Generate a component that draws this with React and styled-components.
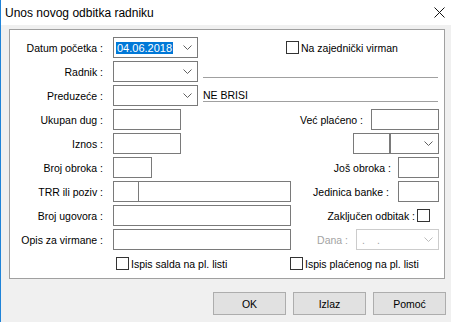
import React from 'react';
import styled, { createGlobalStyle } from 'styled-components';

const GlobalStyle = createGlobalStyle`
  html, body {
    margin: 0;
    padding: 0;
    background: #f0f0f0;
  }
  * {
    box-sizing: border-box;
  }
`;

const Window = styled.div`
  width: 451px;
  height: 322px;
  display: flex;
  flex-direction: column;
  background: #f0f0f0;
  border-left: 1px solid #1f83d8;
  font-family: "Liberation Sans", Arial, sans-serif;
  font-size: 10.5px;
  color: #000;
  overflow: hidden;
`;

const TitleBar = styled.div`
  height: 25px;
  flex: none;
  display: flex;
  align-items: center;
  justify-content: space-between;
  padding: 0 6px 0 4px;
  background: #fff;
  font-size: 12px;
`;

const Panel = styled.div`
  margin: 4px 6px 0 8px;
  height: 250px;
  display: flex;
  flex-direction: column;
  gap: 3px;
  padding: 7px 5px 4px 0;
  background: #fff;
  border: 1px solid #a0a0a0;
`;

const Row = styled.div`
  height: 21px;
  display: flex;
  align-items: center;
`;

const Label = styled.div`
  width: 93px;
  flex: none;
  margin-right: 10px;
  text-align: right;
  white-space: nowrap;
`;

const RightGroup = styled.div`
  margin-left: auto;
  margin-right: ${({ $mr }) => $mr || 0}px;
  display: flex;
  align-items: center;
`;

const RightLabel = styled.span`
  margin-right: ${({ $gap }) => $gap}px;
  white-space: nowrap;
  color: ${({ $muted }) => ($muted ? '#a3a3a3' : '#000')};
`;

const Field = styled.div`
  width: ${({ $w }) => $w}px;
  height: 21px;
  flex: none;
  display: flex;
  align-items: center;
  margin-left: ${({ $ml }) => $ml || 0}px;
  background: #fff;
  border: 1px solid ${({ $disabled }) => ($disabled ? '#cccccc' : '#7a7a7a')};
`;

const Chevron = styled.svg`
  margin-left: auto;
  margin-right: 5px;
  flex: none;
`;

const DateText = styled.span`
  margin-left: 2px;
  padding: 0 1px;
  font-size: 11px;
  line-height: 12px;
  color: #fff;
  background: #0078d7;
`;

const Dots = styled.span`
  margin-left: 5px;
  color: #a3a3a3;
  letter-spacing: 12px;
`;

const Underline = styled.div`
  flex: 1;
  align-self: flex-start;
  height: 17px;
  margin: 0 1px 0 5px;
  padding-top: 4px;
  line-height: 12px;
  border-bottom: 1px solid #a0a0a0;
`;

const Check = styled.label`
  display: flex;
  align-items: center;
  gap: 2px;
  flex: none;
  width: ${({ $w }) => ($w ? `${$w}px` : 'auto')};
  margin-left: ${({ $ml }) => $ml || 0}px;
  white-space: nowrap;
`;

const Box = styled.span`
  width: 13px;
  height: 13px;
  flex: none;
  background: #fff;
  border: 1px solid #333;
`;

const Footer = styled.div`
  display: flex;
  justify-content: flex-end;
  gap: 7px;
  padding: 13px 5px 0 0;
`;

const Button = styled.button`
  width: 73px;
  height: 23px;
  padding: 0;
  font-family: inherit;
  font-size: 10.5px;
  color: #000;
  background: #e1e1e1;
  border: 1px solid #adadad;
`;

const ChevronIcon = ({ muted }) => (
  <Chevron width="9" height="5" viewBox="0 0 9 5">
    <polyline points="0.5,0.5 4.5,4.5 8.5,0.5" fill="none" stroke={muted ? '#bdbdbd' : '#606060'} strokeWidth="1" />
  </Chevron>
);

const Combo = ({ w, ml, muted, children }) => (
  <Field $w={w} $ml={ml} $disabled={muted}>
    {children}
    <ChevronIcon muted={muted} />
  </Field>
);

const CheckBox = ({ children, w, ml }) => (
  <Check $w={w} $ml={ml}>
    <Box />
    <span>{children}</span>
  </Check>
);

const CloseIcon = () => (
  <svg width="11" height="11" viewBox="0 0 11 11">
    <path d="M0.5 0.5 L10.5 10.5 M10.5 0.5 L0.5 10.5" stroke="#111" strokeWidth="1" />
  </svg>
);

export default function App() {
  return (
    <>
      <GlobalStyle />
      <Window>
        <TitleBar>
          <span>Unos novog odbitka radniku</span>
          <CloseIcon />
        </TitleBar>

        <Panel>
          <Row>
            <Label>Datum početka :</Label>
            <Combo w={85}>
              <DateText>04.06.2018</DateText>
            </Combo>
            <CheckBox ml={88}>Na zajednički virman</CheckBox>
          </Row>

          <Row>
            <Label>Radnik :</Label>
            <Combo w={85} />
            <Underline />
          </Row>

          <Row>
            <Label>Preduzeće :</Label>
            <Combo w={85} />
            <Underline>NE BRISI</Underline>
          </Row>

          <Row>
            <Label>Ukupan dug :</Label>
            <Field $w={68} />
            <RightGroup>
              <RightLabel $gap={8}>Već plaćeno :</RightLabel>
              <Field $w={68} />
            </RightGroup>
          </Row>

          <Row>
            <Label>Iznos :</Label>
            <Field $w={68} />
            <RightGroup>
              <Field $w={37} />
              <Combo w={49} />
            </RightGroup>
          </Row>

          <Row>
            <Label>Broj obroka :</Label>
            <Field $w={39} />
            <RightGroup>
              <RightLabel $gap={7}>Još obroka :</RightLabel>
              <Field $w={41} />
            </RightGroup>
          </Row>

          <Row>
            <Label>TRR ili poziv :</Label>
            <Field $w={26} />
            <Field $w={153} $ml={-1} />
            <RightGroup>
              <RightLabel $gap={9}>Jedinica banke :</RightLabel>
              <Field $w={41} />
            </RightGroup>
          </Row>

          <Row>
            <Label>Broj ugovora :</Label>
            <Field $w={178} />
            <RightGroup $mr={9}>
              <RightLabel $gap={2}>Zaključen odbitak :</RightLabel>
              <Box />
            </RightGroup>
          </Row>

          <Row>
            <Label>Opis za virmane :</Label>
            <Field $w={178} />
            <RightGroup>
              <RightLabel $gap={8} $muted>Dana :</RightLabel>
              <Combo w={83} muted>
                <Dots>..</Dots>
              </Combo>
            </RightGroup>
          </Row>

          <Row>
            <Label />
            <CheckBox w={174} ml={3}>Ispis salda na pl. listi</CheckBox>
            <CheckBox>Ispis plaćenog na pl. listi</CheckBox>
          </Row>
        </Panel>

        <Footer>
          <Button>OK</Button>
          <Button>Izlaz</Button>
          <Button>Pomoć</Button>
        </Footer>
      </Window>
    </>
  );
}
